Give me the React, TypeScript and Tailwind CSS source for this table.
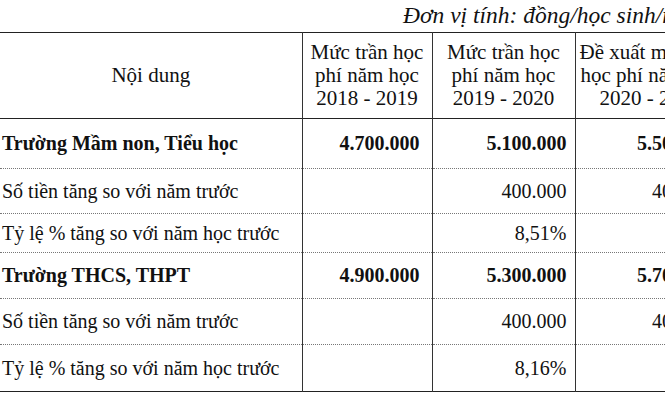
const rows = [
  { label: "Trường Mầm non, Tiểu học", bold: true, a: "4.700.000", b: "5.100.000", c: "5.500.000", h: "h-[50px]" },
  { label: "Số tiền tăng so với năm trước", bold: false, a: "", b: "400.000", c: "400.000", h: "h-[45px]" },
  { label: "Tỷ lệ % tăng so với năm học trước", bold: false, a: "", b: "8,51%", c: "7,84%", h: "h-[39px]" },
  { label: "Trường THCS, THPT", bold: true, a: "4.900.000", b: "5.300.000", c: "5.700.000", h: "h-[46px]" },
  { label: "Số tiền tăng so với năm trước", bold: false, a: "", b: "400.000", c: "400.000", h: "h-[46px]" },
  { label: "Tỷ lệ % tăng so với năm học trước", bold: false, a: "", b: "8,16%", c: "7,55%", h: "h-[47px]" },
];

export default function App() {
  return (
    <div className="w-[665px] h-[404px] overflow-hidden bg-white text-[#111] font-['Liberation_Serif',serif]">
      <div className="h-[32px] pl-[403px] pt-[1px] whitespace-nowrap text-[23.5px] italic leading-[28px]">
        Đơn vị tính: đồng/học sinh/năm
      </div>
      <table className="w-[725px] table-fixed border-collapse text-[20px] leading-[23px]">
        <colgroup>
          <col className="w-[302px]" />
          <col className="w-[130px]" />
          <col className="w-[143px]" />
          <col className="w-[150px]" />
        </colgroup>
        <thead>
          <tr className="h-[86px] border-t border-b border-[#222] text-[21px]">
            <th className="font-normal text-center align-middle">Nội dung</th>
            <th className="font-normal text-center align-middle border-l border-[#333] px-1">
              Mức trần học
              <br />
              phí năm học
              <br />
              2018 - 2019
            </th>
            <th className="font-normal text-center align-middle border-l border-[#333] px-1">
              Mức trần học
              <br />
              phí năm học
              <br />
              2019 - 2020
            </th>
            <th className="font-normal text-center align-middle border-l border-[#333] px-1 whitespace-nowrap">
              Đề xuất mức trần
              <br />
              học phí năm học
              <br />
              2020 - 2021
            </th>
          </tr>
        </thead>
        <tbody>
          {rows.map((r, i) => (
            <tr
              key={i}
              className={`${r.h} ${
                i === rows.length - 1 ? "border-b border-solid border-[#222]" : "border-b border-dotted border-[#777]"
              }`}
            >
              <td className={`pl-[2px] whitespace-nowrap ${r.bold ? "font-bold" : ""}`}>{r.label}</td>
              <td className={`text-right pr-[12px] border-l border-solid border-[#333] ${r.bold ? "font-bold" : ""}`}>{r.a}</td>
              <td className={`text-right pr-[8px] border-l border-solid border-[#333] ${r.bold ? "font-bold" : ""}`}>{r.b}</td>
              <td className={`text-right pr-[8px] border-l border-solid border-[#333] ${r.bold ? "font-bold" : ""}`}>{r.c}</td>
            </tr>
          ))}
        </tbody>
      </table>
    </div>
  );
}
